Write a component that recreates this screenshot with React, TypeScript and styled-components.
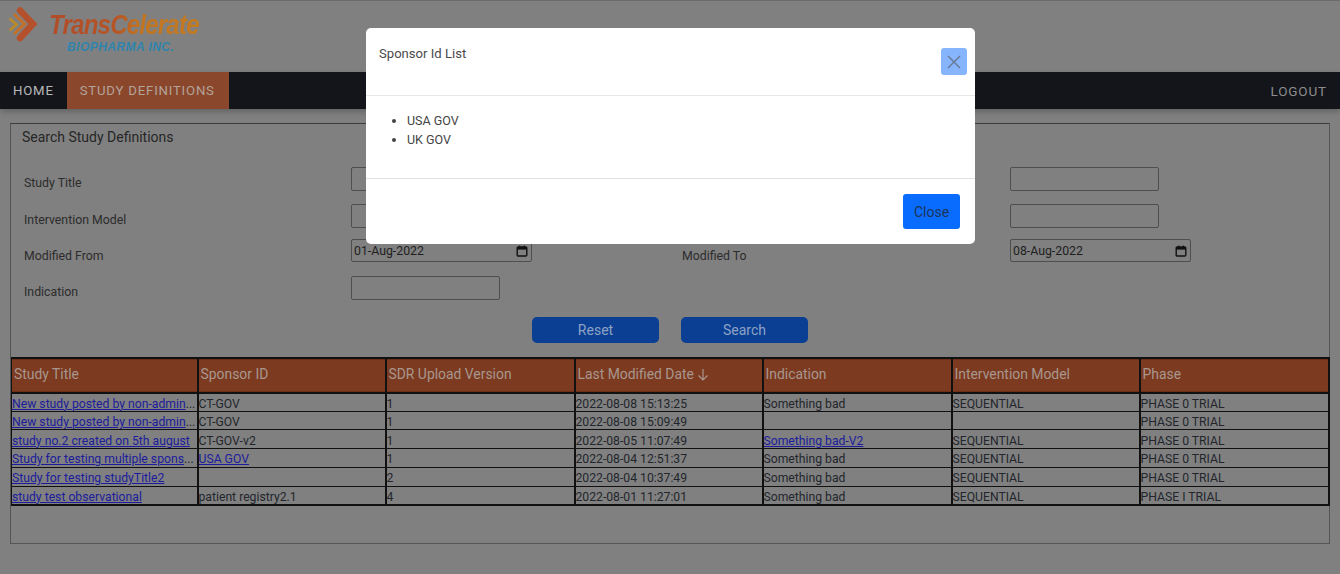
import React from "react";
import styled, { createGlobalStyle } from "styled-components";

const Global = createGlobalStyle`
  html, body { margin: 0; padding: 0; background: #808080; }
  body { font-family: Roboto, "Liberation Sans", sans-serif; width: 1340px; height: 574px; overflow: hidden; }
  * { box-sizing: border-box; }
`;

const Page = styled.div`
  position: relative;
  width: 1340px;
  height: 574px;
  background: #808080;
  border-top: 1px solid #6c6c6c;
  overflow: hidden;
`;
const Header = styled.header`
  height: 71px;
  display: flex;
  align-items: flex-start;
  gap: 9px;
`;
const LogoText = styled.div`
  display: flex;
  flex-direction: column;
  font-family: "Liberation Sans", sans-serif;
  font-style: italic;
  font-weight: 700;
  margin-top: 10px;
`;
const LogoMain = styled.span`
  display: block;
  font-size: 26.5px;
  line-height: 26px;
  letter-spacing: -0.9px;
  background: linear-gradient(90deg, #b04c28 0%, #b65426 45%, #c2741f 60%, #c47a20 100%);
  -webkit-background-clip: text;
  background-clip: text;
  color: transparent;
  transform: scale(0.91, 1.05);
  transform-origin: left top;
`;
const LogoSub = styled.span`
  font-size: 12px;
  line-height: 13px;
  letter-spacing: 0.45px;
  color: #2f84ae;
  padding-left: 18px;
  margin-top: 4px;
`;
const Nav = styled.nav`
  height: 37px;
  background: #14151b;
  display: flex;
  align-items: stretch;
  justify-content: space-between;
  box-shadow: 0 3px 6px rgba(0, 0, 0, 0.22);
`;
const NavGroup = styled.div`
  display: flex;
`;
const NavItem = styled.a<{ $active?: boolean }>`
  display: flex;
  align-items: center;
  padding: 0 ${(p) => (p.$active ? "14.5px" : "13px")} 0 13px;
  font-size: 13.2px;
  letter-spacing: 0.8px;
  color: ${(p) => (p.$active ? "#b3a39b" : "#b8b8b8")};
  background: ${(p) => (p.$active ? "#8a472b" : "transparent")};
`;
const Logout = styled(NavItem)`
  color: #8c8c8c;
  padding: 0 13px 0 0;
  font-size: 13.5px;
  letter-spacing: 0.85px;
`;
const Panel = styled.section`
  margin: 14px 10px 0;
  height: 421px;
  border: 1px solid #555;
  border-top-color: #3d3d3d;
`;
const PanelTitle = styled.h2`
  margin: 0;
  padding: 4px 0 0 11px;
  font-size: 14px;
  line-height: 18px;
  font-weight: 400;
  color: #262626;
`;
const Form = styled.div`
  margin-top: 15px;
  display: grid;
  grid-template-columns: 340px 331px 328px 1fr;
  grid-auto-rows: 36.4px;
  align-items: center;
`;
const Label = styled.label<{ $inset?: boolean }>`
  font-size: 12.3px;
  color: #2c2c2c;
  padding-left: ${(p) => (p.$inset ? "0" : "13px")};
  position: relative;
  top: 4px;
`;
const Spacer = styled.div``;
const Field = styled.input`
  display: block;
  width: 149px;
  height: 24px;
  background: transparent;
  border: 1px solid #4e4e4e;
  border-radius: 2px;
  outline: none;
`;
const DateBox = styled.div`
  width: 181px;
  height: 23px;
  margin-top: -3px;
  border: 1px solid #4e4e4e;
  border-radius: 2px;
  display: flex;
  align-items: center;
  justify-content: space-between;
  padding: 1px 3px 0 2px;
  font-size: 12.3px;
  color: #1e1e1e;
`;
const Actions = styled.div`
  display: flex;
  gap: 22px;
  padding-left: 521px;
  margin-top: 10px;
`;
const PrimaryButton = styled.button`
  width: 127px;
  height: 26px;
  border: 0;
  border-radius: 5px;
  background: #0a3f94;
  color: #8ea3c4;
  font: 400 14px Roboto, sans-serif;
`;
const TableWrap = styled.div`
  margin-top: 14px;
`;
const Table = styled.table`
  width: 1317px;
  table-layout: fixed;
  border-collapse: collapse;
  border: 2px solid #111;
  border-left-width: 1px;
`;
const Column = styled.col<{ $w: number }>`
  width: ${(p) => p.$w}px;
`;
const Th = styled.th`
  height: 35px;
  background: #7c3a20;
  color: #a8978e;
  border: 2px solid #111;
  padding: 0 2px 2px;
  text-align: left;
  font-weight: 400;
  font-size: 13.9px;
  box-shadow: inset 0 1px 0 #6c3019, inset 0 -1px 0 #6c3019;
  &:first-child { border-left-width: 1px; }
`;
const Td = styled.td`
  height: 18.7px;
  padding: 3px 0 0;
  border-style: solid;
  border-color: #111;
  border-width: 1px 2px;
  font-size: 12.2px;
  line-height: 14px;
  color: #22262c;
  white-space: nowrap;
  overflow: hidden;
  &:first-child { border-left-width: 1px; }
`;
const Link = styled.a`
  color: #1c1c9c;
  text-decoration: underline;
`;
const Modal = styled.div`
  position: absolute;
  left: 366px;
  top: 27px;
  width: 609px;
  height: 216px;
  background: #fff;
  border-radius: 5px;
  display: flex;
  flex-direction: column;
  color: #444;
`;
const ModalHeader = styled.div`
  height: 68px;
  border-bottom: 1px solid #e6e6e6;
  display: flex;
  justify-content: space-between;
  align-items: flex-start;
  padding: 17px 8px 0 13px;
`;
const ModalTitle = styled.span`
  font-size: 13.1px;
  line-height: 18px;
  color: #4a4a4a;
`;
const CloseX = styled.button`
  width: 26px;
  height: 27px;
  margin-top: 3px;
  padding: 0;
  border: 0;
  border-radius: 3px;
  background: #86b5fd;
  display: flex;
  align-items: center;
  justify-content: center;
`;
const ModalBody = styled.ul`
  margin: 0;
  height: 83px;
  border-bottom: 1px solid #e2e2e2;
  padding: 16px 0 0 41px;
  list-style: disc;
`;
const Item = styled.li`
  font-size: 12.5px;
  line-height: 18.8px;
  color: #444;
`;
const ModalFooter = styled.div`
  flex: 1;
  display: flex;
  justify-content: flex-end;
  align-items: flex-start;
  padding: 15px 15px 0 0;
`;
const CloseButton = styled.button`
  width: 57px;
  height: 35px;
  border: 0;
  border-radius: 3px;
  background: #0a6cff;
  color: #1c3558;
  font: 400 14px Roboto, sans-serif;
`;
const SortArrow = styled.svg`
  display: inline-block;
  vertical-align: -2px;
  margin-left: 3px;
`;

const Calendar = () => (
  <svg width="12" height="12" viewBox="0 0 12 12" fill="none">
    <rect x="1.2" y="2" width="9.6" height="9" rx="1" stroke="#111" strokeWidth="1.4" />
    <rect x="1.2" y="2" width="9.6" height="2.6" fill="#111" />
    <rect x="3" y="0.6" width="1.3" height="2" fill="#111" />
    <rect x="7.7" y="0.6" width="1.3" height="2" fill="#111" />
  </svg>
);

const Logo = () => (
  <svg width="40" height="44" viewBox="0 0 40 44" fill="none" strokeLinejoin="miter" style={{ flexShrink: 0 }}>
    <path d="M20 9.5 L33 23 L20 37" stroke="#b5502c" strokeWidth="6.5" strokeLinecap="round" />
    <path d="M14 13 L24.5 23 L14 33" stroke="#c4702a" strokeWidth="3" />
    <path d="M9.5 17.5 L16.5 23.5 L9.5 29.5" stroke="#b98a2a" strokeWidth="2.6" />
  </svg>
);

const columns = [186, 188, 189, 188, 189, 188, 189];

const rows: [React.ReactNode, React.ReactNode, string, string, React.ReactNode, string, string][] = [
  [<><Link>New study posted by non-admin</Link>...</>, "CT-GOV", "1", "2022-08-08 15:13:25", "Something bad", "SEQUENTIAL", "PHASE 0 TRIAL"],
  [<><Link>New study posted by non-admin</Link>...</>, "CT-GOV", "1", "2022-08-08 15:09:49", "", "", "PHASE 0 TRIAL"],
  [<Link>study no.2 created on 5th august</Link>, "CT-GOV-v2", "1", "2022-08-05 11:07:49", <Link>Something bad-V2</Link>, "SEQUENTIAL", "PHASE 0 TRIAL"],
  [<><Link>Study for testing multiple spons</Link>...</>, <Link>USA GOV</Link>, "1", "2022-08-04 12:51:37", "Something bad", "SEQUENTIAL", "PHASE 0 TRIAL"],
  [<Link>Study for testing studyTitle2</Link>, "", "2", "2022-08-04 10:37:49", "Something bad", "SEQUENTIAL", "PHASE 0 TRIAL"],
  [<Link>study test observational</Link>, "patient registry2.1", "4", "2022-08-01 11:27:01", "Something bad", "SEQUENTIAL", "PHASE I TRIAL"],
];

export default function App() {
  return (
    <>
      <Global />
      <Page>
        <Header>
          <Logo />
          <LogoText>
            <LogoMain>TransCelerate</LogoMain>
            <LogoSub>BIOPHARMA INC.</LogoSub>
          </LogoText>
        </Header>
        <Nav>
          <NavGroup>
            <NavItem>HOME</NavItem>
            <NavItem $active>STUDY DEFINITIONS</NavItem>
          </NavGroup>
          <Logout>LOGOUT</Logout>
        </Nav>
        <Panel>
          <PanelTitle>Search Study Definitions</PanelTitle>
          <Form>
            <Label>Study Title</Label>
            <Field readOnly />
            <Spacer />
            <Field readOnly />
            <Label>Intervention Model</Label>
            <Field readOnly />
            <Spacer />
            <Field readOnly />
            <Label>Modified From</Label>
            <DateBox>01-Aug-2022<Calendar /></DateBox>
            <Label $inset>Modified To</Label>
            <DateBox>08-Aug-2022<Calendar /></DateBox>
            <Label>Indication</Label>
            <Field readOnly />
          </Form>
          <Actions>
            <PrimaryButton>Reset</PrimaryButton>
            <PrimaryButton>Search</PrimaryButton>
          </Actions>
          <TableWrap>
            <Table>
              <colgroup>
                {columns.map((w, i) => (
                  <Column key={i} $w={w} />
                ))}
              </colgroup>
              <thead>
                <tr>
                  <Th>Study Title</Th>
                  <Th>Sponsor ID</Th>
                  <Th>SDR Upload Version</Th>
                  <Th>
                    Last Modified Date
                    <SortArrow width="12" height="13" viewBox="0 0 12 13" fill="none" stroke="#a8978e" strokeWidth="1.2">
                      <path d="M6 1 V12 M1.5 7.5 L6 12 L10.5 7.5" />
                    </SortArrow>
                  </Th>
                  <Th>Indication</Th>
                  <Th>Intervention Model</Th>
                  <Th>Phase</Th>
                </tr>
              </thead>
              <tbody>
                {rows.map((r, i) => (
                  <tr key={i}>
                    {r.map((c, j) => (
                      <Td key={j}>{c}</Td>
                    ))}
                  </tr>
                ))}
              </tbody>
            </Table>
          </TableWrap>
        </Panel>
        <Modal>
          <ModalHeader>
            <ModalTitle>Sponsor Id List</ModalTitle>
            <CloseX aria-label="Close">
              <svg width="14" height="14" viewBox="0 0 14 14" stroke="#68788f" strokeWidth="1.4">
                <path d="M1 1 L13 13 M13 1 L1 13" />
              </svg>
            </CloseX>
          </ModalHeader>
          <ModalBody>
            <Item>USA GOV</Item>
            <Item>UK GOV</Item>
          </ModalBody>
          <ModalFooter>
            <CloseButton>Close</CloseButton>
          </ModalFooter>
        </Modal>
      </Page>
    </>
  );
}
